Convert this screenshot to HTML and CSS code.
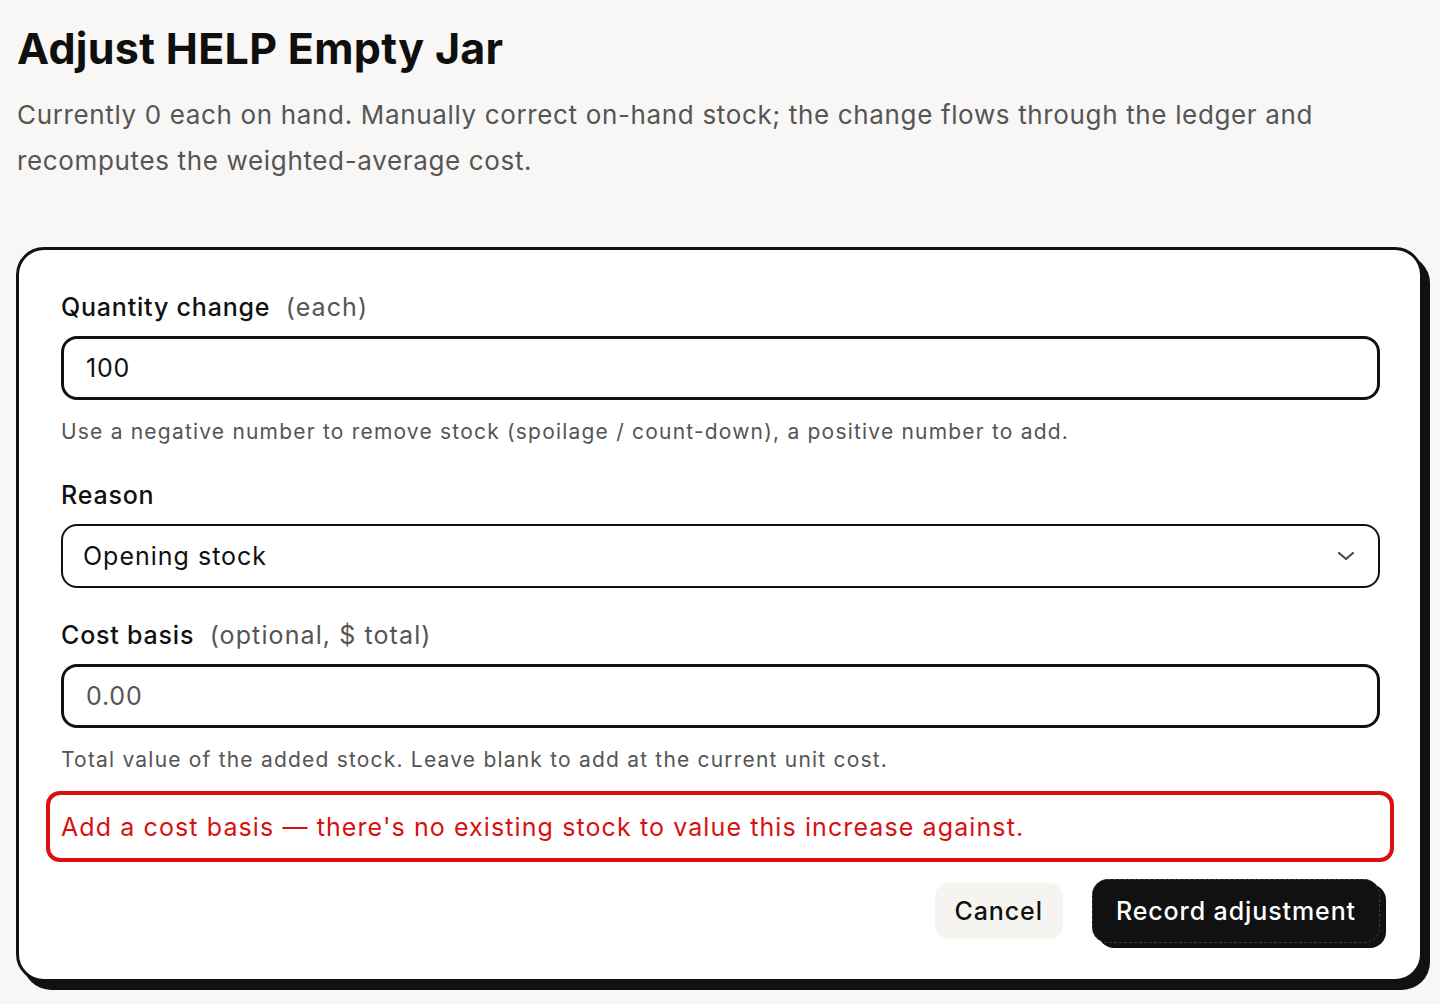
FILE: index.html
```html
<!DOCTYPE html>
<html lang="en">
<head>
  <meta charset="UTF-8" />
  <meta name="viewport" content="width=device-width, initial-scale=1.0"/>
  <title>Adjust HELP Empty Jar</title>
  <link rel="stylesheet" href="styles.css">
</head>
<body>
  <main class="page">
    <h1>Adjust HELP Empty Jar</h1>
    <p class="lead">Currently 0 each on hand. Manually correct on-hand stock; the change flows through the ledger and recomputes the weighted-average cost.</p>

    <form class="card" id="adjust-form">
      <label class="field-label" for="qty">Quantity change <span class="unit">(each)</span></label>
      <input class="text-input" type="text" id="qty" value="100" />
      <p class="hint">Use a negative number to remove stock (spoilage / count-down), a positive number to add.</p>

      <label class="field-label spaced" for="reason">Reason</label>
      <div class="select-wrap">
        <select class="select-input" id="reason">
          <option>Opening stock</option>
          <option>Spoilage</option>
          <option>Count correction</option>
        </select>
        <svg class="chevron" width="20" height="20" viewBox="0 0 20 20" fill="none" stroke="#4a4a4a" stroke-width="2.2" stroke-linecap="round" stroke-linejoin="round"><path d="M3 7l7 6 7-6"/></svg>
      </div>

      <label class="field-label after-select" for="cost">Cost basis <span class="unit">(optional, $ total)</span></label>
      <input class="text-input" type="text" id="cost" placeholder="0.00" />
      <p class="hint">Total value of the added stock. Leave blank to add at the current unit cost.</p>

      <div class="error-msg">Add a cost basis — there's no existing stock to value this increase against.</div>

      <div class="actions">
        <button type="button" class="btn-ghost">Cancel</button>
        <button type="submit" class="btn-primary">Record adjustment</button>
      </div>
    </form>
  </main>
</body>
</html>
```

FILE: styles.css
```css
* { margin: 0; padding: 0; box-sizing: border-box; }

html, body {
  width: 100%;
  height: 100%;
  font-family: Inter, 'Noto Sans', sans-serif;
  background-color: #f8f7f5;
  color: #111;
}

.page {
  padding: 20px 16px 0 16px;
}

h1 {
  font-size: 43px;
  font-weight: 700;
  line-height: 56px;
  letter-spacing: 0.3px;
  padding-left: 1px;
  color: #0f0f0f;
}

.lead {
  margin-top: 16px;
  font-size: 26px;
  line-height: 46px;
  color: #555;
  letter-spacing: 0.65px;
  padding-left: 1px;
}

.card {
  display: flex;
  flex-direction: column;
  margin-top: 63px;
  width: 1407px;
  background-color: #fff;
  border: 3px solid #111;
  border-radius: 28px;
  box-shadow: 7px 8px 0 #111;
  padding: 40px 40px 36px 42px;
}

.field-label {
  font-size: 25px;
  font-weight: 500;
  line-height: 34px;
  letter-spacing: 0.8px;
  color: #111;
}

.field-label.spaced {
  margin-top: 32px;
}

.field-label.after-select {
  margin-top: 30px;
}

.unit {
  margin-left: 8px;
  font-weight: 400;
  letter-spacing: 1.1px;
  color: #555;
}

.text-input {
  margin-top: 12px;
  height: 64px;
  width: 100%;
  border: 3px solid #111;
  border-radius: 16px;
  padding: 0 22px;
  font-family: inherit;
  font-size: 25px;
  letter-spacing: 0.8px;
  color: #111;
  background: #fff;
  outline: none;
}

.text-input::placeholder {
  color: #555;
}

.hint {
  margin-top: 18px;
  font-size: 21px;
  line-height: 28px;
  color: #555;
  letter-spacing: 1.2px;
}

.select-wrap {
  position: relative;
  margin-top: 12px;
}

.select-input {
  appearance: none;
  -webkit-appearance: none;
  width: 100%;
  height: 64px;
  border: 2px solid #111;
  border-radius: 16px;
  padding: 0 20px;
  font-family: inherit;
  font-size: 25px;
  letter-spacing: 1px;
  color: #111;
  background: #fff;
  outline: none;
}

.chevron {
  position: absolute;
  right: 24px;
  top: 22px;
  pointer-events: none;
}

.error-msg {
  margin: 17px -14px 0 -15px;
  height: 71px;
  display: flex;
  align-items: center;
  padding: 0 11px;
  border: 4px solid #d91010;
  border-radius: 14px;
  color: #d91010;
  font-size: 25px;
  letter-spacing: 1.1px;
}

.actions {
  display: flex;
  justify-content: flex-end;
  align-items: center;
  gap: 29px;
  margin-top: 17px;
  height: 64px;
}

button {
  font-family: inherit;
  font-size: 25px;
  font-weight: 500;
  letter-spacing: 0.9px;
  border: none;
  cursor: pointer;
}

.btn-ghost {
  height: 56px;
  padding: 0 20px;
  background-color: #f6f4f1;
  color: #111;
  border-radius: 14px;
}

.btn-primary {
  height: 64px;
  padding: 0 23px;
  background-color: #111;
  color: #fff;
  border: 1px dashed #3a3a3a;
  border-radius: 16px;
  box-shadow: 6px 5px 0 #111;
}
```
